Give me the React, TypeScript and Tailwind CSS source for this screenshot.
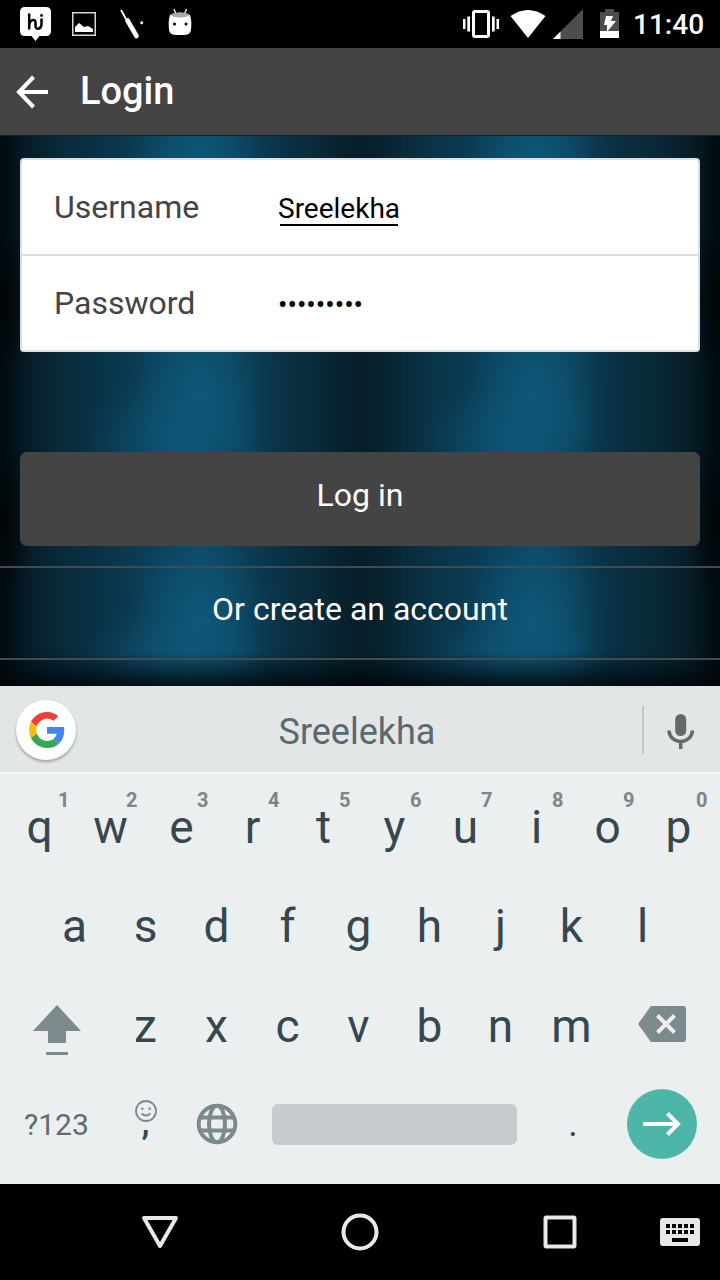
import React from "react";

const ROW1 = ["q", "w", "e", "r", "t", "y", "u", "i", "o", "p"];
const ROW2 = ["a", "s", "d", "f", "g", "h", "j", "k", "l"];
const ROW3 = ["z", "x", "c", "v", "b", "n", "m"];

function Backdrop() {
  const columns = [200, 535];
  const rows = [170, 395, 621];
  return (
    <svg className="absolute inset-0 h-full w-full" viewBox="0 136 720 550" preserveAspectRatio="none" aria-hidden="true">
      <defs>
        <linearGradient id="base" x1="0" y1="0" x2="720" y2="0" gradientUnits="userSpaceOnUse">
          <stop offset="0" stopColor="#01080c" />
          <stop offset=".03" stopColor="#051a24" />
          <stop offset=".08" stopColor="#08293a" />
          <stop offset=".16" stopColor="#0a364b" />
          <stop offset=".22" stopColor="#0b415b" />
          <stop offset=".28" stopColor="#0c4762" />
          <stop offset=".33" stopColor="#0b3f57" />
          <stop offset=".38" stopColor="#0a3448" />
          <stop offset=".43" stopColor="#0a2b3b" />
          <stop offset=".5" stopColor="#061d27" />
          <stop offset=".53" stopColor="#08222e" />
          <stop offset=".58" stopColor="#0a3042" />
          <stop offset=".65" stopColor="#0a3a51" />
          <stop offset=".7" stopColor="#0b425d" />
          <stop offset=".75" stopColor="#0c4762" />
          <stop offset=".8" stopColor="#0b3d55" />
          <stop offset=".85" stopColor="#0a3043" />
          <stop offset=".92" stopColor="#092735" />
          <stop offset=".97" stopColor="#061a23" />
          <stop offset="1" stopColor="#01080c" />
        </linearGradient>
        <radialGradient id="glow">
          <stop offset="0" stopColor="#0f5b7d" stopOpacity=".95" />
          <stop offset=".45" stopColor="#0e5778" stopOpacity=".6" />
          <stop offset="1" stopColor="#0e5778" stopOpacity="0" />
        </radialGradient>
        <radialGradient id="shade">
          <stop offset="0" stopColor="#000305" stopOpacity=".85" />
          <stop offset="1" stopColor="#000305" stopOpacity="0" />
        </radialGradient>
        <linearGradient id="floor" x1="0" y1="0" x2="0" y2="1">
          <stop offset="0" stopColor="#000305" stopOpacity="0" />
          <stop offset="1" stopColor="#000305" stopOpacity=".8" />
        </linearGradient>
        <filter id="soften" x="-10%" y="-10%" width="120%" height="120%" colorInterpolationFilters="sRGB">
          <feGaussianBlur stdDeviation="9" />
        </filter>
      </defs>
      <g filter="url(#soften)">
        <rect x="-40" y="96" width="800" height="630" fill="url(#base)" />
        {rows.map((y) => columns.map((x) => (
          <g key={`${x}-${y}`} fill="url(#glow)">
            <ellipse cx={x} cy={y} rx="68" ry="105" />
            <ellipse cx={x - 22} cy={y + 45} rx="92" ry="62" opacity=".75" />
          </g>
        )))}
      </g>
      {[300, 520].map((y) => [0, 720].map((x) => <ellipse key={`${x}-${y}`} cx={x} cy={y} rx="36" ry="85" fill="url(#shade)" />))}
      <rect y="652" width="720" height="34" fill="url(#floor)" />
    </svg>
  );
}

function StatusBar() {
  return (
    <header className="flex h-12 shrink-0 bg-black">
      <svg width="200" height="48" viewBox="0 0 200 48" fill="#fff">
        <path d="M25 7H46Q51 7 51 12V31Q51 36 46 36H39.500L35.500 41L31.500 36H25Q20 36 20 31V12Q20 7 25 7Z" />
        <path d="M29.200 13.500V29.500M29.200 25C29.500 20 35.500 18 35.500 22.500V26Q35.500 29 38.500 28.700Q41.500 28 41.500 24V18.500" fill="none" stroke="#000" strokeWidth="2.500" />
        <circle cx="41.500" cy="15.500" r="1.400" fill="#000" />
        <rect x="72.750" y="12.750" width="22.500" height="22.500" fill="none" stroke="#d8d8d8" strokeWidth="1.500" />
        <path d="M75 32V27L79 23L84 27L88 26L93 29V32Z" />
        <path d="M121 10L126 19" stroke="#fff" strokeWidth="1.800" />
        <path d="M127.500 20.500L136.500 36" stroke="#fff" strokeWidth="4.600" strokeLinecap="round" />
        <circle cx="141.700" cy="22.700" r="1.500" />
        <path d="M174 9l2 5M186.500 9l-2 5" stroke="#ddd" strokeWidth="1.500" />
        <path d="M170 15Q180 10 190 15Q192.500 23 190.500 32Q188.500 35 184 35H176Q171.500 35 169.500 32Q167.500 23 170 15Z" />
        <ellipse cx="180" cy="15" rx="9" ry="2.500" fill="#aaa" />
        <circle cx="174.500" cy="24" r="1.500" fill="#000" /><circle cx="186" cy="24" r="1.500" fill="#000" />
      </svg>
      <svg className="ml-auto" width="180" height="48" viewBox="460 0 180 48" fill="#fff">
        <rect x="473.500" y="11.500" width="15" height="25" rx="1.500" fill="none" stroke="#fff" strokeWidth="3" />
        <path d="M463 19h2.500v10H463zM467.300 16.500h2.700v15h-2.700zM492 16.500h2.700v15H492zM496.500 19h2.500v10h-2.500z" />
        <path d="M510.500 16Q528 4 545.500 16L528 38Z" />
        <path d="M583 9V39H553Z" fill="#4d4d4d" /><path d="M560.500 31.500V39H553Z" />
        <path d="M605 9h9v3h5v19h-19V12h5z" fill="#4d4d4d" /><path d="M600 31h19v7h-19z" />
        <path d="M606 16H613L611 21H616L607 32V25H604Z" />
      </svg>
      <span className="w-20 text-[28px] leading-[49px] font-medium text-white"><span className="-ml-[7px]">11:40</span></span>
    </header>
  );
}

function SuggestionBar() {
  return (
    <div className="flex h-[88px] shrink-0 items-start border-b-2 border-[#f6f8f8] bg-[#e2e6e7]">
      <div className="mt-[14px] ml-4 flex h-[60px] w-[60px] shrink-0 items-center justify-center rounded-full bg-white shadow-[0_2px_3px_rgba(0,0,0,.3)]">
        <svg width="36" height="36" viewBox="0 0 48 48" className="ml-[2px]">
          <path fill="#ea4335" d="M24 0C14.620 0 6.510 5.380 2.560 13.220L10 19C12.430 13.500 17.740 8.500 24 8.500c3.540 0 6.300 1.300 8.600 3.500l6.500-6.300C35.500 2.380 30.470 0 24 0z" />
          <path fill="#4285f4" d="M46.980 24.550c0-1.570-.15-3.090-.38-4.550H24v9.020h12.940c-.58 2.960-2.260 5.480-4.780 7.180l7.730 6c4.510-4.180 7.090-10.360 7.090-17.650z" />
          <path fill="#fbbc05" d="M10.530 28.590A14.500 14.500 0 0 1 9.770 24c0-1.600.27-3.140.76-4.590l-7.980-6.190A23.990 23.990 0 0 0 0 24c0 3.880.92 7.540 2.560 10.780z" />
          <path fill="#34a853" d="M24 48c6.480 0 11.930-2.130 15.890-5.810l-7.730-6C30.010 37.640 27.240 38.500 24 38.500c-6.260 0-11.570-4.220-13.470-9.910l-7.980 6.190C6.510 42.620 14.620 48 24 48z" />
        </svg>
      </div>
      <span className="flex-1 pr-1 text-center text-[36px] leading-[93px] text-[#5b686d]">Sreelekha</span>
      <div className="mt-5 h-12 w-[2px] bg-[#c0c9cb]" />
      <svg width="76" height="86" viewBox="0 0 76 86">
        <rect x="31.200" y="28" width="11" height="22" rx="5.500" fill="#666969" />
        <path d="M25 44.500a11.700 11 0 0 0 23.400 0M36.700 55.500V63" fill="none" stroke="#666969" strokeWidth="3.500" />
      </svg>
    </div>
  );
}

function Keyboard() {
  const key = "flex h-[100px] w-[71px] shrink-0 items-start justify-center pt-[25px] text-[46px] leading-[56px] text-[#37474f]";
  return (
    <main className="flex h-[410px] shrink-0 flex-col bg-[#ebeff0]">
      <div className="flex h-[99px] pl-1">
        {ROW1.map((letter, i) => (
          <div key={letter} className={`${key} relative`}>
            {letter}
            <span className={`absolute top-[14px] text-[20px] leading-6 font-bold text-[#7b8689] ${i === 0 ? "left-[54px]" : i === 9 ? "left-[53px]" : "left-[51px]"}`}>{(i + 1) % 10}</span>
          </div>
        ))}
      </div>
      <div className="flex h-[100px] pl-[39px]">
        {ROW2.map((letter) => <div key={letter} className={key}>{letter}</div>)}
      </div>
      <div className="flex h-[101px]">
        <svg width="110" height="100" viewBox="0 973 110 100" fill="#7c898d">
          <path d="M57 1005L81 1031H66V1043H48V1031H33ZM46 1052h22v3H46z" />
        </svg>
        {ROW3.map((letter) => <div key={letter} className={key}>{letter}</div>)}
        <svg width="113" height="100" viewBox="607 973 113 100">
          <path d="M651 1006h32q3 0 3 3v30q0 3-3 3h-32L638 1024Z" fill="#7c898d" />
          <path d="M657.500 1015.500l17 17m0-17l-17 17" stroke="#ebeff0" strokeWidth="4" />
        </svg>
      </div>
      <div className="flex h-[110px]">
        <span className="w-[110px] pl-6 text-[30px] leading-[102px] text-[#5f6d72]">?123</span>
        <div className="flex w-[72px] flex-col items-center pt-[25px]">
          <svg width="24" height="24" viewBox="0 0 24 24" fill="none" stroke="#7c898d" strokeWidth="1.800">
            <circle cx="12" cy="12" r="10" /><path d="M7.500 14.500q4.500 4 9 0" />
            <circle cx="8.300" cy="9.800" r="1.300" fill="#7c898d" stroke="none" /><circle cx="15.700" cy="9.800" r="1.300" fill="#7c898d" stroke="none" />
          </svg>
          <span className="-mt-[13px] pr-px text-[36px] leading-[24px] font-medium text-[#37474f]">,</span>
        </div>
        <svg width="72" height="102" viewBox="182 1074 72 102" fill="none" stroke="#7c898d" strokeWidth="4">
          <circle cx="217" cy="1124" r="18.300" /><ellipse cx="217" cy="1124" rx="8" ry="18.300" />
          <path d="M200 1117.500h34M200 1130.500h34" />
        </svg>
        <div className="mt-[30px] ml-[18px] h-[41px] w-[245px] rounded-md bg-[#c7cccf]" />
        <span className="w-[110px] pl-[2px] text-center text-[36px] leading-[100px] text-[#37474f]">.</span>
        <div className="mt-[15px] h-[70px] w-[70px] rounded-full bg-[#4db6a9]">
          <svg width="70" height="70" viewBox="0 0 70 70" fill="none" stroke="#fff" strokeWidth="4">
            <path d="M16 35h35M40.500 24.500L51 35L40.500 45.500" />
          </svg>
        </div>
      </div>
    </main>
  );
}

export default function App() {
  return (
    <div className="flex h-[1280px] w-[720px] flex-col overflow-hidden bg-black font-['Roboto',sans-serif]">
      <StatusBar />
      <div className="flex h-[88px] shrink-0 items-center border-b border-[#192126] bg-[#444] text-white">
        <svg width="80" height="87" viewBox="0 48 80 87" fill="none" stroke="#fff" strokeWidth="4">
          <path d="M48 92H20M33.500 77L19 92L33.500 107" />
        </svg>
        <h1 className="pb-[2px] text-[38px] leading-[84px] font-medium">Login</h1>
      </div>
      <section className="relative h-[550px] shrink-0">
        <Backdrop />
        <div className="relative flex h-full flex-col pt-[22px]">
          <div className="mx-5 h-[194px] shrink-0 rounded border-2 border-[#dce0e3] bg-white">
            <div className="flex h-24 border-b-2 border-[#dcdcdc]">
              <span className="w-[224px] pl-8 text-[32px] leading-[95px] text-[#444]">Username</span>
              <div className="ml-8 flex h-[66px] flex-col text-[28px] leading-[97px] text-black">
                <span className="h-16">Sreelekha</span>
                <span className="mx-[2px] h-[2px] bg-black" />
              </div>
            </div>
            <div className="flex h-[94px]">
              <span className="w-[256px] pl-8 text-[32px] leading-[95px] text-[#444]">Password</span>
              <span className="text-[28px] leading-[97px] text-black">•••••••••</span>
            </div>
          </div>
          <button className="mx-5 mt-[100px] h-[94px] shrink-0 rounded-[7px] bg-[#444] pb-2 text-[32px] text-white">Log in</button>
          <button className="mt-5 h-[94px] shrink-0 border-y-2 border-[#444b50] pb-2 text-[32px] text-white">Or create an account</button>
        </div>
      </section>
      <SuggestionBar />
      <Keyboard />
      <svg className="h-24 w-full shrink-0" viewBox="0 1184 720 96" fill="none" stroke="#e8e8e8" strokeWidth="4">
        <path d="M144 1218H176L160 1246Z" strokeLinejoin="round" />
        <circle cx="360" cy="1232" r="16.500" />
        <rect x="545.500" y="1217.500" width="29" height="29" rx="1" />
        <rect x="660" y="1218" width="40" height="28" rx="3" fill="#e8e8e8" stroke="none" />
        <path d="M666 1226h30M666 1232h30" stroke="#000" strokeDasharray="4 2" />
        <path d="M672 1240h16" stroke="#000" />
      </svg>
    </div>
  );
}
